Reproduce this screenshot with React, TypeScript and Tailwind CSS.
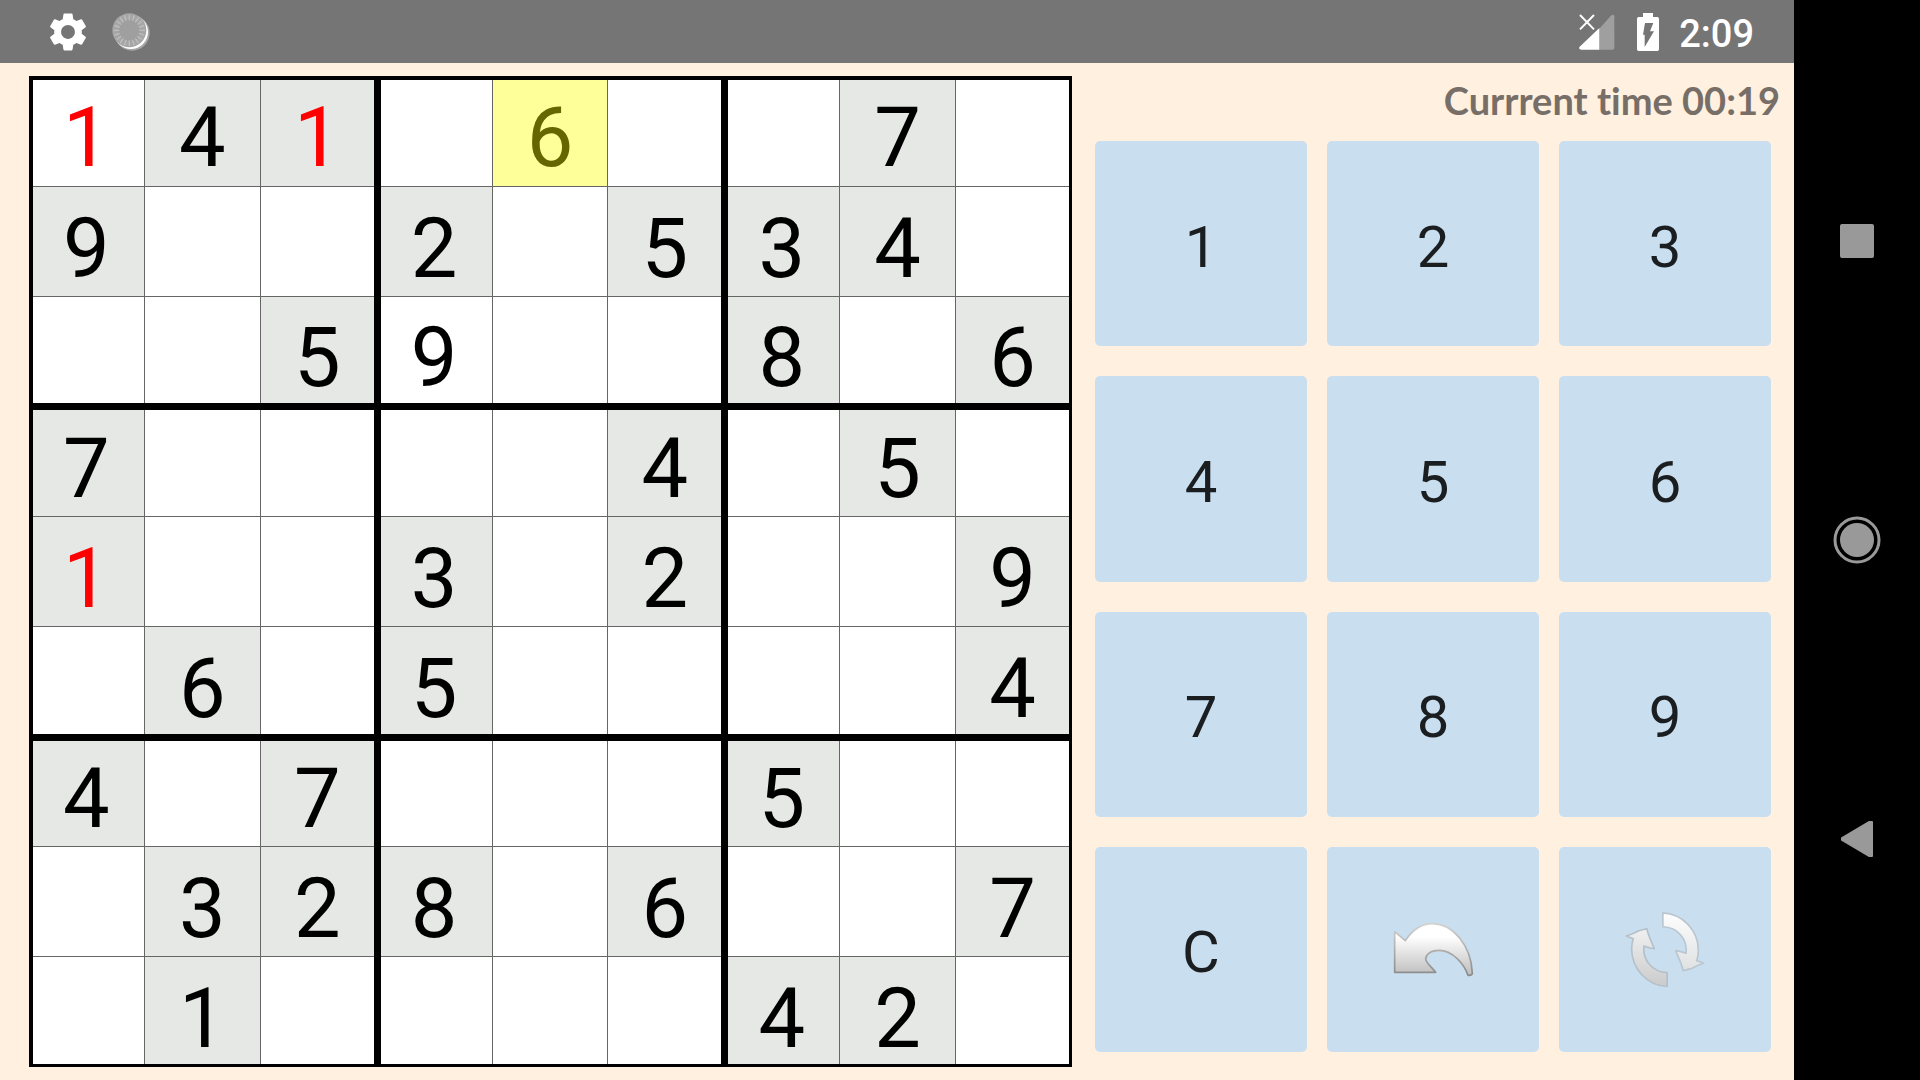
import { useState } from 'react';
import { MdSettings } from 'react-icons/md';
import clsx from 'clsx';

const PUZZLE = [
  '141060070',
  '900205340',
  '005900806',
  '700004050',
  '100302009',
  '060500004',
  '407000500',
  '032806007',
  '010000420',
];

// cells filled in by the player, everything else is a given
const PLAYER = ['0-0', '0-4', '2-3'];
const CONFLICTS = ['0-0', '0-2', '4-0'];
const KEYS = ['1', '2', '3', '4', '5', '6', '7', '8', '9', 'C'];
const THREE = [0, 1, 2];

function SpinnerIcon() {
  const ticks = Array.from({ length: 20 }, (_, i) => i * 18);
  return (
    <svg className="w-[38px] h-[38px]" viewBox="0 0 114 114" aria-hidden="true">
      <circle cx="60" cy="60" r="53" fill="#a8a8a8" />
      <circle cx="57" cy="57" r="51" fill="#ffffff" />
      <circle cx="52" cy="52" r="51" fill="#a6a6a6" />
      <circle cx="52" cy="52" r="34" fill="#9f9f9f" />
      {ticks.map(a => <path key={a} d="M52 5v17" stroke="#bdbdbd" strokeWidth="4" transform={`rotate(${a} 52 52)`} />)}
    </svg>
  );
}

function SignalIcon() {
  return (
    <svg className="w-9 h-9" viewBox="0 0 108 108" aria-hidden="true">
      <path d="M61 44 97 4q9-5 9 3v95q0 5-5 5H61z" fill="#9f9f9f" />
      <path d="M61 42v65H6q-9-2-4-9z" fill="#fff" />
      <path d="M3 3 45 46M45 3 3 46" stroke="#fff" strokeWidth="6" />
    </svg>
  );
}

function BatteryIcon() {
  return (
    <svg className="w-[22px] h-[38px]" viewBox="0 0 66 114" aria-hidden="true">
      <path d="M18 0h30v12h13q5 0 5 5v92q0 5-5 5H5q-5 0-5-5V17q0-5 5-5h13z" fill="#fff" />
      <path d="M24 30h25L39 55h12L23 102V65H18z" fill="#757575" />
    </svg>
  );
}

function UndoIcon() {
  return (
    <svg className="w-[82px] h-[56px]" viewBox="36 245 246 168" aria-hidden="true">
      <defs>
        <linearGradient id="undoFill" x1="0" y1="0" x2="0" y2="1">
          <stop offset="0.25" stopColor="#ffffff" />
          <stop offset="1" stopColor="#bdbdbd" />
        </linearGradient>
        <linearGradient id="undoEdge" x1="0" y1="0" x2="0" y2="1">
          <stop offset="0" stopColor="#d2d2d2" />
          <stop offset="1" stopColor="#8a8a8a" />
        </linearGradient>
      </defs>
      <path d="M44 277 76 304C100 267 130 253 158 253C218 253 274 318 277 402Q276 409 264 408C252 372 216 333 178 333C148 333 137 348 137 359C137 370 156 384 167 399H44Z" fill="url(#undoFill)" stroke="url(#undoEdge)" strokeWidth="5" strokeLinejoin="round" />
    </svg>
  );
}

function RestartIcon() {
  const arrow = 'M219 219C278 221 326 272 326 332Q326 350 321 363L342 371Q320 378 305 387L280 393C276 372 264 350 258 333Q266 333 289 341C294 300 264 262 219 261Z';
  return (
    <svg className="w-20 h-[77px]" viewBox="105 214 241 231" aria-hidden="true">
      <defs>
        <linearGradient id="restartTop" x1="0" y1="0" x2="0" y2="1">
          <stop offset="0" stopColor="#fdfdfd" />
          <stop offset="1" stopColor="#dfe1e2" />
        </linearGradient>
        <linearGradient id="restartBottom" x1="0" y1="0" x2="0" y2="1">
          <stop offset="0" stopColor="#cbcbcb" />
          <stop offset="1" stopColor="#f0f0f0" />
        </linearGradient>
      </defs>
      <path d={arrow} fill="url(#restartTop)" stroke="#bac6d0" strokeWidth="5" strokeLinejoin="round" />
      <path d={arrow} fill="url(#restartBottom)" stroke="#b4c0ca" strokeWidth="5" strokeLinejoin="round" transform="rotate(180 225.5 330)" />
    </svg>
  );
}

export default function App() {
  const [selected, setSelected] = useState('0-4');

  const renderCell = (row: number, col: number) => {
    const id = `${row}-${col}`;
    const value = PUZZLE[row][col];
    const given = value !== '0' && !PLAYER.includes(id);
    const isSelected = selected === id;
    return (
      <button
        key={id}
        onClick={() => setSelected(id)}
        aria-label={`Row ${row + 1}, column ${col + 1}`}
        className={clsx(
          'flex items-center justify-center min-w-0 min-h-0 text-[83px] leading-none',
          isSelected ? 'bg-[#ffff99]' : given ? 'bg-[#e5e8e4]' : 'bg-white',
          CONFLICTS.includes(id) ? 'text-[#ff0000]' : isSelected ? 'text-[#666600]' : 'text-black',
          row % 3 === 0 && 'pt-2.5',
          row % 3 === 1 && 'pt-3.5',
          row % 3 === 2 && 'pt-4',
          col % 3 === 0 && 'pr-1',
        )}
      >
        {value !== '0' && value}
      </button>
    );
  };

  return (
    <div className="flex h-screen bg-black font-['Roboto',sans-serif]">
      <div className="flex flex-col flex-1 min-w-0 bg-[#fff0e0]">
        <header className="flex items-center justify-between h-[63px] shrink-0 pl-[45px] pr-10 bg-[#757575] text-white">
          <div className="flex items-center gap-[21px]">
            <MdSettings className="w-[46px] h-[46px]" />
            <SpinnerIcon />
          </div>
          <div className="flex items-center">
            <SignalIcon />
            <div className="flex items-center gap-5 pl-[22px]">
              <BatteryIcon />
              <span className="text-[38px] leading-none font-medium pt-1">2:09</span>
            </div>
          </div>
        </header>

        <main className="grid grid-cols-[1043fr_676fr] gap-[23px] flex-1 min-h-0 pl-[29px] pr-[23px]">
          <div className="grid grid-cols-3 grid-rows-3 gap-[7px] my-[13px] bg-black border-t-4 border-l-4 border-r-3 border-b-3 border-black">
            {THREE.map(boxRow => THREE.map(boxCol => (
              <div key={`${boxRow}${boxCol}`} className="grid grid-cols-[111fr_115fr_113fr] grid-rows-[106fr_109fr_107fr] gap-px min-h-0 bg-[#666666]">
                {THREE.map(r => THREE.map(c => renderCell(boxRow * 3 + r, boxCol * 3 + c)))}
              </div>
            )))}
          </div>

          <div className="flex flex-col min-h-0 pb-7">
            <p className="flex items-center justify-end h-[78px] pb-1 -mr-[9px] text-[38px] font-bold whitespace-nowrap text-[#776f67] font-['Lato',sans-serif] [font-variant-ligatures:none]">Currrent time 00:19</p>
            <div className="grid grid-cols-3 grid-rows-4 gap-x-5 gap-y-[30px] flex-1 min-h-0 text-[58px] leading-none text-[#1b1e20]">
              {KEYS.map(key => <button key={key} className="flex items-center justify-center pt-1.5 rounded-[5px] bg-[#c9dfef]">{key}</button>)}
              <button aria-label="Undo" className="flex items-center justify-center rounded-[5px] bg-[#c9dfef]"><UndoIcon /></button>
              <button aria-label="Restart" className="flex items-center justify-center rounded-[5px] bg-[#c9dfef]"><RestartIcon /></button>
            </div>
          </div>
        </main>
      </div>

      <nav className="flex flex-col items-center justify-between w-[126px] shrink-0 py-[217px]">
        <button aria-label="Recent apps">
          <svg className="w-12 h-12" viewBox="0 0 48 48"><rect x="7" y="7" width="34" height="34" rx="2" fill="#999999" /></svg>
        </button>
        <button aria-label="Home">
          <svg className="w-12 h-12" viewBox="0 0 48 48"><circle cx="24" cy="24" r="22" fill="none" stroke="#999999" strokeWidth="3" /><circle cx="24" cy="24" r="17" fill="#999999" /></svg>
        </button>
        <button aria-label="Back">
          <svg className="w-12 h-12" viewBox="0 0 48 48"><path d="M9 23 36 7h3v34h-3L9 25z" fill="#999999" stroke="#999999" strokeWidth="2" strokeLinejoin="round" /></svg>
        </button>
      </nav>
    </div>
  );
}
